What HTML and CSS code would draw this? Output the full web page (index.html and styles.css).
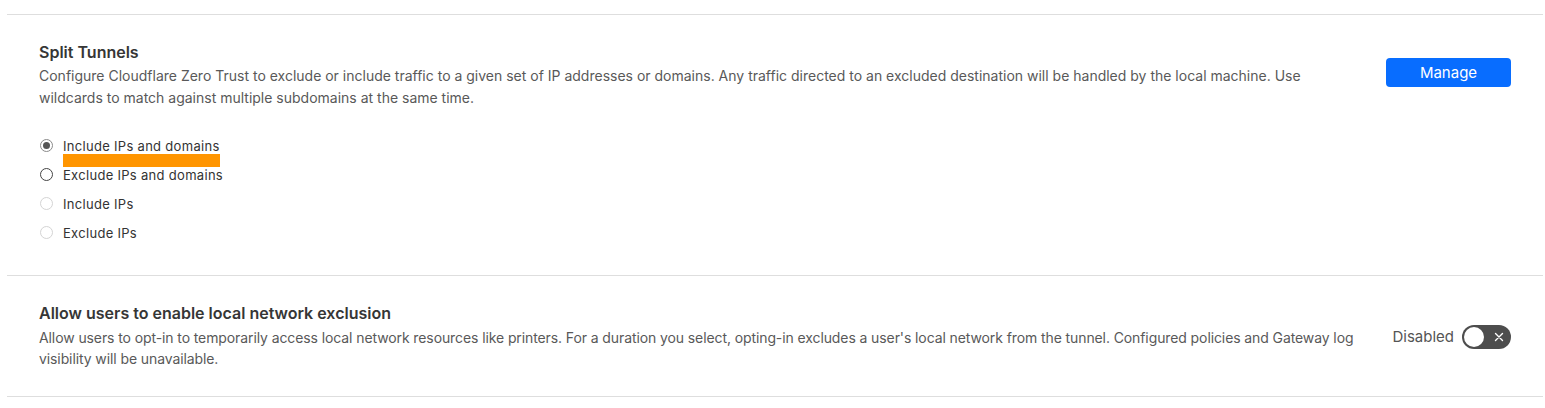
FILE: index.html
```html
<!DOCTYPE html>
<html lang="en">
<head>
<meta charset="utf-8">
<title>Device settings</title>
<link rel="stylesheet" href="styles.css">
</head>
<body>
<div class="settings">
  <section class="setting">
    <div class="setting-text">
      <h3 class="setting-title">Split Tunnels</h3>
      <p class="setting-desc">Configure Cloudflare Zero Trust to exclude or include traffic to a given set of IP addresses or domains. Any traffic directed to an excluded destination will be handled by the local machine. Use wildcards to match against multiple subdomains at the same time.</p>
      <div class="radio-group">
        <label class="radio-row">
          <span class="radio radio-checked"></span>
          <span class="radio-label">Include IPs and domains<span class="highlight"></span></span>
        </label>
        <label class="radio-row">
          <span class="radio"></span>
          <span class="radio-label">Exclude IPs and domains</span>
        </label>
        <label class="radio-row">
          <span class="radio radio-disabled"></span>
          <span class="radio-label">Include IPs</span>
        </label>
        <label class="radio-row">
          <span class="radio radio-disabled"></span>
          <span class="radio-label">Exclude IPs</span>
        </label>
      </div>
    </div>
    <button class="btn-primary">Manage</button>
  </section>
  <section class="setting setting-center">
    <div class="setting-text">
      <h3 class="setting-title">Allow users to enable local network exclusion</h3>
      <p class="setting-desc setting-desc-tight">Allow users to opt-in to temporarily access local network resources like printers. For a duration you select, opting-in excludes a user's local network from the tunnel. Configured policies and Gateway log visibility will be unavailable.</p>
    </div>
    <div class="toggle-group">
      <span class="toggle-label">Disabled</span>
      <span class="toggle">
        <span class="toggle-knob"></span>
        <svg class="toggle-x" width="10" height="10" viewBox="0 0 10 10"><path d="M1.5 1.5 L8.5 8.5 M8.5 1.5 L1.5 8.5" stroke="#fff" stroke-width="1.4" stroke-linecap="round"/></svg>
      </span>
    </div>
  </section>
</div>
</body>
</html>
```
FILE: styles.css
```css
* { box-sizing: border-box; }
body {
  margin: 0;
  background: #fff;
  font-family: Inter, "Noto Sans", "Liberation Sans", sans-serif;
  color: #333;
}
.settings {
  margin: 14px 2px 0 7px;
}
.setting {
  display: flex;
  justify-content: space-between;
  align-items: flex-start;
  gap: 54px;
  padding: 27px 32px 28px;
  border-top: 1px solid #dedede;
}
.setting:last-child {
  border-bottom: 1px solid #dedede;
  padding-bottom: 27px;
}
.setting-center {
  align-items: center;
  gap: 14px;
}
.setting-text {
  flex: 1;
  min-width: 0;
}
.setting-title {
  margin: 0;
  font-size: 16px;
  line-height: 20px;
  font-weight: 600;
  color: #363636;
}
.setting-desc {
  margin: 3px 0 0;
  font-size: 14px;
  line-height: 22px;
  color: #595959;
}
.setting-desc-tight {
  margin-top: 4px;
  line-height: 21px;
  letter-spacing: -0.1px;
}
.radio-group {
  display: flex;
  flex-direction: column;
  margin-top: 22px;
}
.radio-row {
  display: flex;
  align-items: center;
  height: 29px;
  gap: 10px;
  font-size: 13px;
  letter-spacing: 0.3px;
  color: #333;
}
.radio {
  width: 13px;
  height: 13px;
  margin-left: 1px;
  border-radius: 50%;
  border: 1px solid #444;
  background: #fff;
  flex: none;
  position: relative;
}
.radio-checked {
  border-color: #8a8a8a;
}
.radio-checked::after {
  content: "";
  position: absolute;
  left: 2px;
  top: 2px;
  width: 7px;
  height: 7px;
  border-radius: 50%;
  background: #555;
}
.radio-disabled {
  border-color: #d4d4d4;
}
.radio-label {
  position: relative;
}
.highlight {
  position: absolute;
  left: 0;
  right: 0;
  top: 16px;
  height: 13px;
  background: #ff9500;
}
.btn-primary {
  margin-top: 16px;
  width: 125px;
  height: 29px;
  border: none;
  border-radius: 4px;
  background: #086dff;
  color: #fff;
  font-family: inherit;
  font-size: 15px;
  flex: none;
  cursor: pointer;
}
.toggle-group {
  display: flex;
  align-items: center;
  gap: 8px;
  flex: none;
  padding-top: 1px;
}
.toggle-label {
  font-size: 15px;
  color: #555;
}
.toggle {
  position: relative;
  display: flex;
  align-items: center;
  width: 49px;
  height: 24px;
  border-radius: 12px;
  background: #4d4d4d;
  padding: 2px;
}
.toggle-knob {
  width: 20px;
  height: 20px;
  border-radius: 50%;
  background: #fff;
}
.toggle-x {
  margin-left: 10px;
}
```
